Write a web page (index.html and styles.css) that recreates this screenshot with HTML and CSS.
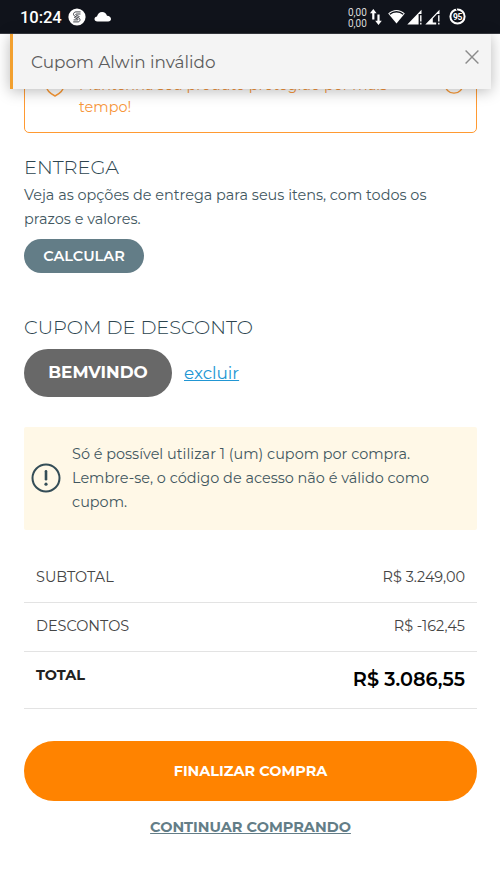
FILE: index.html
```
<!DOCTYPE html>
<html lang="pt-BR">
<head>
<meta charset="utf-8">
<meta name="viewport" content="width=device-width, initial-scale=1">
<title>Carrinho</title>
<link rel="stylesheet" href="styles.css">
</head>
<body>
<header class="status">
  <div class="status-left">
    <span class="clock">10:24</span>
    <svg class="app" width="18" height="18" viewBox="0 0 18 18"><circle cx="9" cy="9" r="8.6" fill="#fff"/><path d="M12.6 3.9H8C5.2 3.9 4.6 7.2 6.9 8.2L11 10C12.8 11 12 13.9 10 13.9H5.2M12.5 6H8.6C7.6 6 7.4 6.8 8.2 7.2L11.6 8.7M5.6 11.9H9.4C10.3 11.9 10.3 11.3 9.6 10.9L6.2 9.4" fill="none" stroke="#30333b" stroke-width=".9"/></svg>
    <svg class="cloud" width="18" height="11" viewBox="0 0 18 11"><path d="M3.4 10.5C1.5 10.5.5 9.5.5 8.1.5 6.7 1.6 5.7 3 5.6 3.6 2.6 5.5.9 8.1.9c2.5 0 4.2 1.5 4.9 3.9 2.4.1 4 1.4 4 3.2 0 1.6-1.1 2.5-2.8 2.5Z" fill="#fff"/></svg>
  </div>
  <div class="status-right">
    <div class="speed"><span>0,00</span><span>0,00</span></div>
    <svg class="arrows" width="12" height="18" viewBox="0 0 12 18"><path d="M3.3 11.5V3M8.5 6.5V15" stroke="#fff" stroke-width="2.2"/><path d="M0 5.2 3.3 1 6.6 5.2ZM5.2 12.8 8.5 17 11.8 12.8Z" fill="#fff"/></svg>
    <svg class="wifi" width="17" height="15" viewBox="0 0 17 15"><path d="M.2 4.5C4.8-.2 12.2-.2 16.8 4.5L8.5 14.5Z" fill="#fff"/><path d="M1.8 5.2C5.6 2 11.4 2 15.2 5.2" fill="none" stroke="#10131b" stroke-width="1.4"/></svg>
    <svg class="signal" width="16" height="16" viewBox="0 0 16 16"><path d="M.3 15.5 14.5.8V5H11.6V15.5Z" fill="#fff"/><path d="M13.8 6.3V12.4M13.8 13.8V15.5" stroke="#fff" stroke-width="1.4"/></svg>
    <svg class="signal" width="16" height="16" viewBox="0 0 16 16"><path d="M.3 15.5 14.5.8V5H12L7.8 9.5V13.6H11.2V15.5Z" fill="#fff"/><path d="M13.8 6.3V12.4M13.8 13.8V15.5" stroke="#fff" stroke-width="1.4"/></svg>
    <svg class="battery" width="17" height="17" viewBox="0 0 17 17"><circle cx="8.5" cy="8.5" r="7.1" fill="none" stroke="#fff" stroke-width="2"/><path d="M7 0 8 2.6" stroke="#10131b" stroke-width="1"/><text x="8.5" y="11.6" text-anchor="middle" class="battery-text">95</text></svg>
  </div>
</header>

<div class="toast" role="alert">
  <span>Cupom Alwin inválido</span>
  <svg class="close" width="14" height="14" viewBox="0 0 14 14"><path d="M.6.6 13.4 13.4M13.4.6.6 13.4" stroke="#8b8b8b" stroke-width="1.4"/></svg>
</div>

<main class="cart">
  <section class="protect">
    <svg class="shield" width="20" height="24" viewBox="0 0 20 24"><path d="M10 1 18.5 4V13C18.5 18 14.5 20.7 10 23 5.5 20.7 1.5 18 1.5 13V4Z" fill="none" stroke="#fb9a36" stroke-width="1.5"/></svg>
    <p>Mantenha seu produto protegido por mais<br>tempo!</p>
    <svg class="info" width="20" height="20" viewBox="0 0 20 20"><circle cx="10" cy="10" r="9.2" fill="none" stroke="#fb9a36" stroke-width="1.3"/></svg>
  </section>

  <section class="delivery">
    <h2>ENTREGA</h2>
    <p>Veja as opções de entrega para seus itens, com todos os<br>prazos e valores.</p>
    <button class="calc">CALCULAR</button>
  </section>

  <section class="coupon">
    <h2>CUPOM DE DESCONTO</h2>
    <div class="coupon-row"><span class="code">BEMVINDO</span><a href="#">excluir</a></div>
  </section>

  <aside class="notice">
    <svg width="30" height="30" viewBox="0 0 30 30"><circle cx="15" cy="15" r="13.5" fill="none" stroke="#344d57" stroke-width="2"/><path d="M15 8.2V16.3" stroke="#344d57" stroke-width="2.6" stroke-linecap="round"/><circle cx="15" cy="21.2" r="1.6" fill="#344d57"/></svg>
    <p>Só é possível utilizar 1 (um) cupom por compra.<br>Lembre-se, o código de acesso não é válido como<br>cupom.</p>
  </aside>

  <dl class="totals">
    <div><dt>SUBTOTAL</dt><dd>R$ 3.249,00</dd></div>
    <div><dt>DESCONTOS</dt><dd>R$ -162,45</dd></div>
    <div class="total"><dt>TOTAL</dt><dd>R$ 3.086,55</dd></div>
  </dl>

  <button class="checkout">FINALIZAR COMPRA</button>
  <a class="continue" href="#">CONTINUAR COMPRANDO</a>
</main>
</body>
</html>
```
FILE: styles.css
```
* { box-sizing: border-box; margin: 0; padding: 0; }
body {
  height: 889px;
  overflow: hidden;
  position: relative;
  background: #fff;
  color: #42575f;
  font: 400 14.45px/24px Montserrat, Inter, sans-serif;
}
svg { display: block; flex: none; }
button { border: 0; font: inherit; color: #fff; }

.status {
  height: 34px;
  display: flex;
  justify-content: space-between;
  padding: 0 34px 0 20px;
  background: #10131b;
  border-bottom: 1px solid #383a41;
  color: #fff;
  font-family: Roboto, sans-serif;
}
.status-left, .status-right { display: flex; align-items: center; }
.clock { font-size: 16.6px; font-weight: 500; width: 42px; padding-top: 2px; letter-spacing: -.1px; }
.app { margin-left: 6px; }
.cloud { margin-left: 8px; }
.speed { display: flex; flex-direction: column; width: 19px; font-size: 10px; line-height: 11px; padding-top: 2px; color: #ddd; }
.arrows { margin-left: 3px; }
.wifi { margin-left: 6px; }
.signal { margin-left: 2px; }
.battery { margin-left: 8px; }
.battery-text { font: 700 8.5px Roboto, sans-serif; fill: #fff; letter-spacing: -.3px; }

.toast {
  position: absolute;
  z-index: 2;
  top: 34px;
  left: 10px;
  width: 481px;
  height: 55px;
  display: flex;
  justify-content: space-between;
  padding: 16px 12px 0 18px;
  background: #f4f4f4;
  border-left: 3px solid #f2a02f;
  box-shadow: 0 2px 14px rgba(0, 0, 0, .28);
  color: #5c5c5c;
  font-size: 16.85px;
}

.cart { padding: 21px 23px 0 24px; }
.protect {
  display: flex;
  height: 78px;
  padding: 19px 12px 0 20px;
  border: 1.4px solid #ff9a32;
  border-radius: 5px;
  color: #f7963a;
}
.protect p { flex: 1; margin-left: 14px; line-height: 21.6px; white-space: nowrap; }
.info { margin-top: -1px; }
.shield { margin-top: -2px; }

h2 { font-size: 19.35px; font-weight: 300; line-height: 24px; color: #2c454f; }
.delivery { padding-top: 22px; }
.delivery p { padding-top: 4px; }
.calc {
  display: block;
  width: 120px;
  height: 34px;
  margin-top: 8px;
  border-radius: 17px;
  background: #637d87;
  font-size: 14.5px;
  font-weight: 600;
}
.coupon { padding-top: 42px; }
.coupon-row { display: flex; align-items: center; gap: 12px; padding-top: 10px; font-size: 16.85px; }
.code { width: 148px; height: 48px; border-radius: 24px; background: #686868; color: #fff; font-weight: 700; line-height: 47px; text-align: center; }
.coupon-row a { color: #2196d3; }

.notice {
  display: flex;
  align-items: center;
  gap: 11px;
  height: 103px;
  margin-top: 30px;
  padding: 0 0 1px 7px;
  border-radius: 2px;
  background: #fff8e7;
}

.totals { padding-top: 24px; color: #454545; }
.totals div { display: flex; justify-content: space-between; height: 49px; padding: 11px 12px 0; border-bottom: 1px solid #e3e3e3; }
.totals .total { height: 57px; color: #222; font-weight: 700; }
.total dd { font-size: 19.3px; font-weight: 600; color: #000; line-height: 32px; }

.checkout { display: block; width: 100%; height: 60px; margin-top: 32px; border-radius: 30px; background: #ff8300; font-weight: 700; }
.continue { display: block; margin-top: 14px; text-align: center; color: #637d87; font-weight: 700; font-size: 14.5px; }
```
